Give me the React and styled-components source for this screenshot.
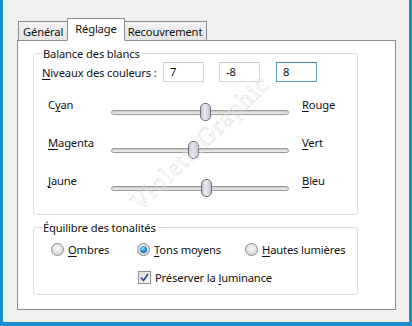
import React from "react";
import styled, { createGlobalStyle } from "styled-components";

const Global = createGlobalStyle`
  html, body { margin: 0; padding: 0; background: #f0f0f0; }
  body { font-family: "Noto Sans", "DejaVu Sans", sans-serif; font-size: 11.2px; letter-spacing: -0.15px; color: #111; }
`;

const Window = styled.div`
  position: relative;
  width: 412px;
  height: 326px;
  box-sizing: border-box;
  background: #f0f0f0;
  border-left: 3px solid #1b8ed0;
  border-right: 3px solid #1b8ed0;
  border-bottom: 4px solid #1b8ed0;
  padding: 18px 0 0 14px;
  overflow: hidden;
`;

const TabStrip = styled.div`
  display: flex;
  align-items: flex-end;
  height: 22px;
  padding-left: 1px;
  position: relative;
  z-index: 2;
`;

const Tab = styled.div`
  box-sizing: border-box;
  height: ${(p) => (p.$active ? "23px" : "19px")};
  padding: 0 ${(p) => (p.$active ? "7px" : "4px")};
  margin: 0 ${(p) => (p.$active ? "-1px" : "0")};
  display: flex;
  align-items: ${(p) => (p.$active ? "flex-start" : "center")};
  padding-top: ${(p) => (p.$active ? "2px" : "0")};
  border: 1px solid #898c95;
  border-bottom: ${(p) => (p.$active ? "1px solid #fff" : "none")};
  background: ${(p) => (p.$active ? "#fff" : "linear-gradient(#f2f2f2, #e4e4e4)")};
  margin-bottom: ${(p) => (p.$active ? "-1px" : "0")};
  z-index: ${(p) => (p.$active ? 2 : 1)};
  border-left-width: ${(p) => (p.$noLeft ? "0" : "1px")};
  white-space: nowrap;
`;

const Panel = styled.div`
  box-sizing: border-box;
  width: 379px;
  height: 270px;
  background: #fff;
  border: 1px solid #898c95;
  padding: 5px 0 0 15px;
  display: flex;
  flex-direction: column;
  gap: 5px;
`;

const Group = styled.fieldset`
  box-sizing: border-box;
  width: 325px;
  height: ${(p) => p.$h}px;
  margin: 0;
  border: 1px solid #dcdcdc;
  border-radius: 3px;
  padding: 0 0 0 8px;
`;

const Legend = styled.legend`
  padding: 0 2px 0 1px;
  margin-left: 0;
  line-height: 15px;
`;

const LevelsRow = styled.div`
  display: flex;
  align-items: center;
  margin-top: 1px;
  height: 20px;
`;

const LevelsLabel = styled.span`
  width: 121px;
  white-space: nowrap;
`;

const NumBox = styled.div`
  box-sizing: border-box;
  width: 41px;
  height: 20px;
  border: 1px solid ${(p) => (p.$focus ? "#5b9bd1" : "#d6d9dc")};
  border-top-color: ${(p) => (p.$focus ? "#3c7fb1" : "#c4c8cc")};
  padding: 1px 0 0 6px;
  margin-right: ${(p) => p.$mr}px;
  background: #fff;
  line-height: 16px;
`;

const Sliders = styled.div`
  display: flex;
  flex-direction: column;
  padding-left: 6px;
  margin-top: 15px;
`;

const SliderRow = styled.div`
  display: grid;
  grid-template-columns: 63px 178px auto;
  height: 38px;
`;

const SideLabel = styled.span`
  line-height: 16px;
  margin-left: ${(p) => (p.$right ? "13px" : "0")};
`;

const TrackWrap = styled.div`
  position: relative;
  height: 38px;
`;

const Track = styled.div`
  position: absolute;
  left: 0;
  right: 0;
  top: 13px;
  height: 3px;
  border-radius: 3px;
  border: 1px solid #999;
  background: linear-gradient(#c9c9c9, #efefef);
`;

const Thumb = styled.div`
  position: absolute;
  top: 6px;
  width: 9px;
  height: 16px;
  border-radius: 5px;
  border: 1px solid #6f6f78;
  background: linear-gradient(90deg, #c5c6d4, #ebebf3 45%, #c2c3d2);
`;

const RadioRow = styled.div`
  display: flex;
  align-items: center;
  padding-left: 9px;
  margin-top: 6px;
  height: 16px;
`;

const Option = styled.label`
  display: flex;
  align-items: center;
  gap: 4px;
  width: ${(p) => p.$w}px;
  white-space: nowrap;
`;

const Radio = styled.span`
  box-sizing: border-box;
  width: 13px;
  height: 13px;
  border-radius: 50%;
  border: 1px solid #8a8a8a;
  background: radial-gradient(circle at 50% 40%, #f6f6f6, #cfcfcf);
  display: flex;
  align-items: center;
  justify-content: center;
`;

const Dot = styled.span`
  width: 7px;
  height: 7px;
  border-radius: 50%;
  background: radial-gradient(circle at 40% 35%, #9fe0ff, #1b80c4 55%, #0d4f84);
`;

const CheckRow = styled.div`
  display: flex;
  align-items: center;
  gap: 4px;
  padding-left: 96px;
  margin-top: 12px;
  height: 16px;
`;

const Check = styled.span`
  box-sizing: border-box;
  width: 13px;
  height: 13px;
  border: 1px solid #8f8f8f;
  background: linear-gradient(135deg, #dcdcdc, #f8f8f8);
  display: flex;
  align-items: center;
  justify-content: center;
`;

const U = styled.span`
  text-decoration: underline;
  text-underline-offset: 2px;
`;

const Watermark = styled.div`
  position: absolute;
  left: 197px;
  top: 143px;
  transform: translate(-50%, -50%) rotate(-44deg);
  font-family: "Liberation Serif", serif;
  font-size: 25px;
  letter-spacing: 1.5px;
  color: transparent;
  -webkit-text-stroke: 0.5px #dcdcdc;
  pointer-events: none;
  white-space: nowrap;
  z-index: 5;
`;

const levels = [7, -8, 8];
const sliders = [
  { left: <>C<U>y</U>an</>, right: <><U>R</U>ouge</>, v: 7 },
  { left: <><U>M</U>agenta</>, right: <><U>V</U>ert</>, v: -8 },
  { left: <><U>J</U>aune</>, right: <><U>B</U>leu</>, v: 8 },
];

function Slider({ value }) {
  const pos = ((value + 100) / 200) * (178 - 11);
  return (
    <TrackWrap>
      <Track />
      <Thumb style={{ left: `${pos}px` }} />
    </TrackWrap>
  );
}

export default function App() {
  return (
    <>
      <Global />
      <Window>
        <TabStrip>
          <Tab>Général</Tab>
          <Tab $active>Réglage</Tab>
          <Tab $noLeft>Recouvrement</Tab>
        </TabStrip>
        <Panel>
          <Group $h={169}>
            <Legend>Balance des blancs</Legend>
            <LevelsRow>
              <LevelsLabel>
                <U>N</U>iveaux des couleurs :
              </LevelsLabel>
              {levels.map((l, i) => (
                <NumBox key={i} $focus={i === 2} $mr={i === 0 ? 15 : 16}>
                  {l}
                </NumBox>
              ))}
            </LevelsRow>
            <Sliders>
              {sliders.map((s, i) => (
                <SliderRow key={i}>
                  <SideLabel>{s.left}</SideLabel>
                  <Slider value={s.v} />
                  <SideLabel $right>{s.right}</SideLabel>
                </SliderRow>
              ))}
            </Sliders>
          </Group>
          <Group $h={75}>
            <Legend>Équilibre des tonalités</Legend>
            <RadioRow>
              <Option $w={86}>
                <Radio />
                <span>
                  <U>O</U>mbres
                </span>
              </Option>
              <Option $w={108}>
                <Radio>
                  <Dot />
                </Radio>
                <span>
                  <U>T</U>ons moyens
                </span>
              </Option>
              <Option $w={110}>
                <Radio />
                <span>
                  <U>H</U>autes lumières
                </span>
              </Option>
            </RadioRow>
            <CheckRow>
              <Check>
                <svg width="9" height="9" viewBox="0 0 9 9">
                  <path d="M1 4.5 L3.5 7.5 L8 1" fill="none" stroke="#2b4a8a" strokeWidth="1.6" />
                </svg>
              </Check>
              <span>
                Préserver la <U>l</U>uminance
              </span>
            </CheckRow>
          </Group>
        </Panel>
        <Watermark>VioletteGraphic</Watermark>
      </Window>
    </>
  );
}
